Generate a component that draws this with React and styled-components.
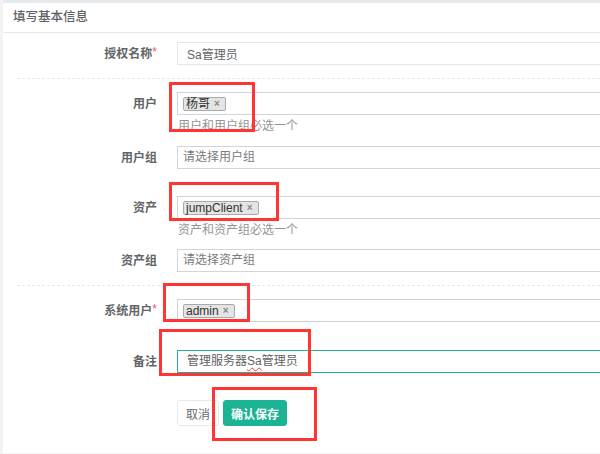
import React from "react";
import styled, { createGlobalStyle } from "styled-components";

const GlobalStyle = createGlobalStyle`
  html, body {
    margin: 0;
    padding: 0;
    overflow: hidden;
    background: #f3f3f4;
  }
  body {
    font-family: "Liberation Sans", "Noto Sans CJK SC", sans-serif;
    font-size: 12px;
    color: #676a6c;
  }
`;

const Page = styled.div`
  position: relative;
  padding-left: 3px;
  overflow: hidden;
`;

const Panel = styled.section`
  background: #ffffff;
  border-top: 3px solid #e7eaec;
`;

const PanelHeader = styled.header`
  height: 29px;
  line-height: 28px;
  padding-left: 10px;
  border-bottom: 1px solid #e7eaec;
  font-size: 12.5px;
  font-weight: 500;
  color: #5f6264;
`;

const PanelBody = styled.div`
  padding: 9px 0 27px 14px;
`;

const FormGroup = styled.div`
  display: flex;
  align-items: flex-start;
  margin-bottom: ${(p) => (p.$mb ?? 27)}px;
`;

const Label = styled.label`
  width: 140px;
  flex: none;
  box-sizing: border-box;
  height: 23px;
  line-height: 23px;
  padding-top: 1px;
  text-align: right;
  font-weight: 700;
  color: #626567;
`;

const Required = styled.span`
  color: #ed5565;
  font-weight: 400;
  vertical-align: top;
  line-height: 18px;
`;

const Control = styled.div`
  flex: 1;
  margin-left: 20px;
  margin-right: -20px;
`;

const TextInput = styled.input`
  display: block;
  width: 100%;
  height: 23px;
  box-sizing: border-box;
  border: 1px solid #e5e6e7;
  padding: 0 9px;
  margin: 0;
  font: inherit;
  color: #5f6264;
  background: #fff;
  outline: none;
`;

const SelectBox = styled.div`
  display: flex;
  align-items: center;
  height: 23px;
  box-sizing: border-box;
  border: 1px solid ${(p) => p.$border || "#cdd6dc"};
  padding: 0 5px;
  background: #fff;
`;

const Placeholder = styled.span`
  color: #7a7a7a;
  line-height: 21px;
`;

const Tag = styled.span`
  display: inline-flex;
  align-items: center;
  height: 14px;
  box-sizing: border-box;
  border: 1px solid #aaaaaa;
  border-radius: 2px;
  background: #e4e4e4;
  padding: 0 5px 0 2px;
  color: #333333;
  font-size: 12px;
  line-height: 12px;
`;

const TagRemove = styled.span`
  margin-left: 4px;
  color: #888888;
  font-size: 10px;
  font-weight: 700;
`;

const Help = styled.div`
  margin: 2px 0 0 1px;
  line-height: 18px;
  color: #959595;
`;

const NoteField = styled.div`
  height: 23px;
  box-sizing: border-box;
  border: 1px solid #1ab394;
  padding: 0 9px;
  line-height: 21px;
  color: #5f6264;
  background: #fff;
`;

const Misspelled = styled.span`
  text-decoration: underline wavy #e0403a;
  text-decoration-thickness: 1px;
  text-underline-offset: 2px;
`;

const Divider = styled.hr`
  border: 0;
  border-top: 1px dashed #e7eaec;
  margin: 13px 0;
`;

const Actions = styled.div`
  display: flex;
  gap: 4px;
  margin-left: 160px;
`;

const Button = styled.button`
  height: 26px;
  box-sizing: border-box;
  padding: 0 ${(p) => (p.$primary ? 7 : 8)}px;
  border-radius: 3px;
  border: 1px solid ${(p) => (p.$primary ? "#1ab394" : "#e7eaec")};
  background: ${(p) => (p.$primary ? "#1ab394" : "#ffffff")};
  color: ${(p) => (p.$primary ? "#ffffff" : "#676a6c")};
  font-family: inherit;
  font-size: 12px;
  font-weight: ${(p) => (p.$primary ? 700 : 400)};
  cursor: pointer;
`;

const Annotation = styled.div`
  position: absolute;
  left: ${(p) => p.$x}px;
  top: ${(p) => p.$y}px;
  width: ${(p) => p.$w}px;
  height: ${(p) => p.$h}px;
  box-sizing: border-box;
  border: 3px solid #ff3535;
  pointer-events: none;
`;

const annotations = [
  { x: 169, y: 82, w: 86, h: 50 },
  { x: 169, y: 182, w: 110, h: 39 },
  { x: 163, y: 283, w: 87, h: 39 },
  { x: 159, y: 329, w: 152, h: 47 },
  { x: 212, y: 387, w: 105, h: 54 },
];

function TagChip({ children }) {
  return (
    <Tag>
      {children}
      <TagRemove>×</TagRemove>
    </Tag>
  );
}

export default function App() {
  return (
    <>
      <GlobalStyle />
      <Page>
        <Panel>
          <PanelHeader>填写基本信息</PanelHeader>
          <PanelBody>
            <FormGroup $mb={0}>
              <Label>
                授权名称<Required>*</Required>
              </Label>
              <Control>
                <TextInput defaultValue="Sa管理员" />
              </Control>
            </FormGroup>
            <Divider />
            <FormGroup $mb={11}>
              <Label>用户</Label>
              <Control>
                <SelectBox>
                  <TagChip>杨哥</TagChip>
                </SelectBox>
                <Help>用户和用户组必选一个</Help>
              </Control>
            </FormGroup>
            <FormGroup>
              <Label>用户组</Label>
              <Control>
                <SelectBox>
                  <Placeholder>请选择用户组</Placeholder>
                </SelectBox>
              </Control>
            </FormGroup>
            <FormGroup $mb={10}>
              <Label>资产</Label>
              <Control>
                <SelectBox>
                  <TagChip>jumpClient</TagChip>
                </SelectBox>
                <Help>资产和资产组必选一个</Help>
              </Control>
            </FormGroup>
            <FormGroup $mb={0}>
              <Label>资产组</Label>
              <Control>
                <SelectBox>
                  <Placeholder>请选择资产组</Placeholder>
                </SelectBox>
              </Control>
            </FormGroup>
            <Divider />
            <FormGroup $mb={28}>
              <Label>
                系统用户<Required>*</Required>
              </Label>
              <Control>
                <SelectBox $border="#cfd3d6">
                  <TagChip>admin</TagChip>
                </SelectBox>
              </Control>
            </FormGroup>
            <FormGroup>
              <Label>备注</Label>
              <Control>
                <NoteField>
                  管理服务器<Misspelled>Sa</Misspelled>管理员
                </NoteField>
              </Control>
            </FormGroup>
            <Actions>
              <Button>取消</Button>
              <Button $primary>确认保存</Button>
            </Actions>
          </PanelBody>
        </Panel>
        {annotations.map((a, i) => (
          <Annotation key={i} $x={a.x} $y={a.y} $w={a.w} $h={a.h} />
        ))}
      </Page>
    </>
  );
}
